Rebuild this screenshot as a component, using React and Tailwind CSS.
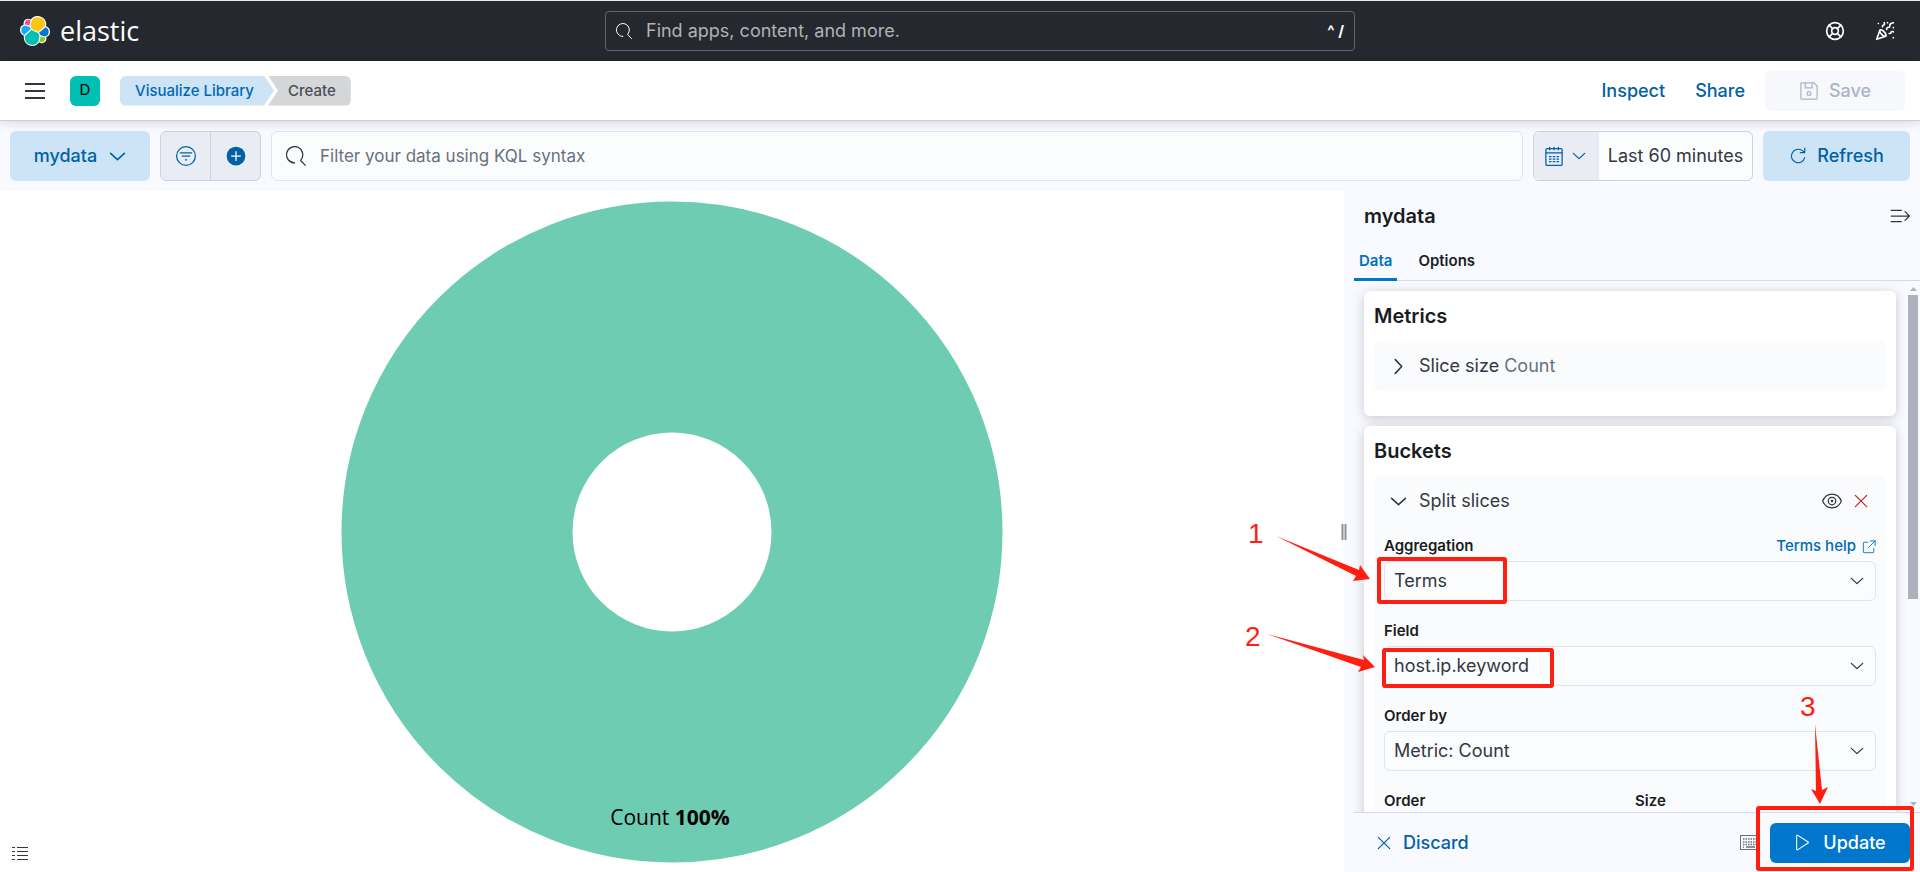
import React, { useState } from 'react';
import { LifeBuoy, PartyPopper } from 'lucide-react';

function Icon({ size = 20, className = '', strokeWidth = 1, children }) {
  return (
    <svg
      width={size}
      height={size}
      viewBox="0 0 16 16"
      fill="none"
      stroke="currentColor"
      strokeWidth={strokeWidth}
      strokeLinecap="round"
      strokeLinejoin="round"
      className={`shrink-0 ${className}`}
      aria-hidden="true"
    >
      {children}
    </svg>
  );
}

const ChevronDown = (props) => (
  <Icon strokeWidth={1.5} {...props}><path d="M1.500 5l6.500 6 6.500-6" /></Icon>
);

const ChevronRight = (props) => (
  <Icon strokeWidth={1.5} {...props}><path d="M5 1.500l6 6.500-6 6.500" /></Icon>
);

const Cross = (props) => (
  <Icon strokeWidth={1.4} {...props}><path d="M1.500 1.500l13 13M14.500 1.500l-13 13" /></Icon>
);

const SearchIcon = (props) => (
  <Icon {...props}>
    <path d="M6.9 13.5a6.5 6.5 0 1 1 4.9-2.2M11.8 11.8l3.7 3.7" />
  </Icon>
);

function ElasticLogo() {
  return (
    <svg width="30" height="30" viewBox="0 0 32 32" aria-hidden="true">
      <path fill="#fff" d="M32 16.77a6.33 6.33 0 0 0-1.14-3.63 6.27 6.27 0 0 0-3.02-2.3 9.1 9.1 0 0 0 .16-1.71A9.13 9.13 0 0 0 11.49 3.8a4.86 4.86 0 0 0-7.47 5.34A6.37 6.37 0 0 0 0 15.1a6.35 6.35 0 0 0 1.14 3.64 6.28 6.28 0 0 0 3.03 2.3 9.1 9.1 0 0 0-.17 1.71 9.12 9.12 0 0 0 16.5 5.33 4.84 4.84 0 0 0 7.46-5.34A6.37 6.37 0 0 0 32 16.77" />
      <path fill="#FEC514" d="M12.58 13.79l7 3.2 7.07-6.2a7.9 7.9 0 0 0 .15-1.56 7.87 7.87 0 0 0-14.37-4.44l-1.18 6.11z" />
      <path fill="#00BFB3" d="M5.33 21.22a8 8 0 0 0-.15 1.58 7.9 7.9 0 0 0 14.42 4.46l1.17-6.09-1.56-2.99-7.03-3.2z" />
      <path fill="#F04E98" d="M5.29 9.07l4.8 1.13 1.06-5.46a3.79 3.79 0 0 0-5.86 4.33" />
      <path fill="#1BA9F5" d="M4.87 10.21a5.29 5.29 0 0 0-3.5 4.98 5.28 5.28 0 0 0 3.39 4.93l6.74-6.1-1.24-2.65z" />
      <path fill="#93C90E" d="M20.87 27.28a3.74 3.74 0 0 0 2.29.78 3.79 3.79 0 0 0 3.58-5l-4.8-1.12z" />
      <path fill="#07C" d="M21.85 20.56l5.28 1.24a5.29 5.29 0 0 0 3.49-4.98 5.28 5.28 0 0 0-3.39-4.93l-6.91 6.06z" />
    </svg>
  );
}

function TopBar() {
  return (
    <header className="flex h-[61px] shrink-0 items-center justify-between border-t border-[#e6ecec] bg-[#25282f]">
      <a href="#home" className="flex w-[150px] items-center gap-2.5 pl-5 text-white">
        <ElasticLogo />
        <span className="font-['Open_Sans',sans-serif] text-[27px] leading-8 font-normal">elastic</span>
      </a>
      <label className="flex h-10 w-[750px] items-center gap-3.5 rounded border border-[#64666c] px-2.5 text-white">
        <SearchIcon size={16} />
        <input
          type="search"
          aria-label="Find apps, content, and more."
          placeholder="Find apps, content, and more."
          className="min-w-0 flex-1 bg-transparent text-lg outline-none placeholder:text-[#b0b2b6]"
        />
        <span className="text-[15px] font-bold">^ /</span>
      </label>
      <div className="flex w-[110px] items-center gap-[30px] pl-[15px] text-white">
        <button aria-label="Help"><LifeBuoy size={20} strokeWidth={2} /></button>
        <button aria-label="News"><PartyPopper size={20} strokeWidth={2} /></button>
      </div>
    </header>
  );
}

function NavBar() {
  return (
    <div className="relative z-10 flex h-[60px] shrink-0 items-center border-b border-[#c9cde0] bg-white pr-[15px] pl-[25px] shadow-[0_2px_10px_rgba(0,0,0,0.14)]">
      <button aria-label="Toggle primary navigation" className="mr-[25px] text-[#343741]">
        <svg width="20" height="20" viewBox="0 0 20 20" fill="currentColor">
          <path d="M0 2h20v2H0zM0 9h20v2H0zM0 16h20v2H0z" />
        </svg>
      </button>
      <button className="mr-5 size-[30px] rounded-md bg-[#00bfb3] text-[15px] text-black">D</button>
      <nav className="flex text-[15px] leading-[30px] font-medium">
        <a
          href="#library"
          className="rounded-l-md bg-[#cce4f5] pr-5 pl-[15px] text-[#0068b5] [clip-path:polygon(0_0,calc(100%_-_10px)_0,100%_50%,calc(100%_-_10px)_100%,0_100%)]"
        >
          Visualize Library
        </a>
        <span className="-ml-1.5 rounded-r-md bg-[#d5d6d8] pr-[15px] pl-5 text-[#4a4d57] [clip-path:polygon(0_0,100%_0,100%_100%,0_100%,10px_50%)]">
          Create
        </span>
      </nav>
      <div className="ml-auto flex items-center text-lg font-medium text-[#0061a6]">
        <button className="mr-[30px]">Inspect</button>
        <button className="mr-5">Share</button>
        <button disabled className="flex h-10 w-[140px] items-center justify-center gap-2.5 rounded-md bg-[#f7f8fc] text-[#abb4c4]">
          <Icon>
            <path d="M1.500 2.500a1 1 0 0 1 1-1h9.500l2.500 2.500v9.500a1 1 0 0 1-1 1h-11a1 1 0 0 1-1-1zM5 1.500v4h5.500v-4" />
            <circle cx="8" cy="10" r="1.500" />
          </Icon>
          Save
        </button>
      </div>
    </div>
  );
}

function QueryBar() {
  return (
    <div className="flex h-[70px] shrink-0 gap-2.5 bg-[#f8faff] p-2.5 text-lg text-[#0061a6]">
      <button className="flex w-[140px] items-center justify-center gap-3 rounded-md bg-[#cce4f5] font-medium">
        mydata
        <ChevronDown size={17} />
      </button>
      <div className="flex w-[101px] divide-x divide-[#ccd2e3] overflow-hidden rounded-md border border-[#ccd2e3] bg-[#e9edf3]">
        <button aria-label="Saved queries" className="flex flex-1 items-center justify-center">
          <Icon>
            <circle cx="8" cy="8" r="7.500" />
            <path d="M3.500 5.500h9M5 8h6M7.500 11h1" />
          </Icon>
        </button>
        <button aria-label="Add filter" className="flex flex-1 items-center justify-center">
          <Icon>
            <circle cx="8" cy="8" r="7" fill="currentColor" />
            <path d="M8 4.500v7M4.500 8h7" stroke="#fff" />
          </Icon>
        </button>
      </div>
      <label className="flex flex-1 items-center gap-3.5 rounded-md border border-[#e0e3f0] bg-[#fbfcfe] px-3.5 text-[#343741]">
        <SearchIcon />
        <input
          aria-label="Filter your data using KQL syntax"
          placeholder="Filter your data using KQL syntax"
          className="min-w-0 flex-1 bg-transparent text-[17px] outline-none placeholder:text-[#69707d]"
        />
      </label>
      <div className="flex w-[220px] overflow-hidden rounded-md border border-[#ccd2e3] bg-[#fbfcfe]">
        <button aria-label="Date quick select" className="flex w-[65px] items-center justify-center gap-2 bg-[#e9edf3] pr-1">
          <Icon>
            <rect x="1.500" y="2" width="13" height="13.500" rx="1" />
            <path d="M1.500 5.500h13M4.500 1v2M8 1v2M11.500 1v2" />
            <path d="M4 8.500h8M4 10.500h8M4 12.500h8" strokeDasharray="2 1" strokeLinecap="butt" />
          </Icon>
          <ChevronDown size={14} />
        </button>
        <button className="flex-1 text-center text-[#343741]">Last 60 minutes</button>
      </div>
      <button className="flex w-[147px] items-center justify-center gap-2.5 rounded-md bg-[#cce4f5] font-medium">
        <Icon size={18}>
          <path d="M14 9.500A6 6 0 1 1 11.500 3l2 1.500M14 1v4h-4" />
        </Icon>
        Refresh
      </button>
    </div>
  );
}

function Chart() {
  return (
    <main className="flex min-w-0 flex-1 items-center bg-white">
      <button aria-label="Toggle legend" className="mb-2.5 ml-3 self-end text-[#343741]">
        <svg width="16" height="16" viewBox="0 0 16 16" stroke="currentColor">
          <path d="M0 1.500h3M5 1.500h11M0 5.500h3M5 5.500h11M0 9.500h3M5 9.500h11M0 13.500h3M5 13.500h11" />
        </svg>
      </button>
      <div className="flex min-w-0 flex-1 justify-center pr-7">
        <svg width="662" height="662" viewBox="0 0 662 662" role="img" aria-label="Count 100%">
          <circle cx="331" cy="331" r="215" fill="none" stroke="#6dccb1" strokeWidth="231" />
          <text x="329" y="624" textAnchor="middle" className="fill-black font-['Open_Sans',sans-serif] text-[21px]">
            Count <tspan className="font-bold">100%</tspan>
          </text>
        </svg>
      </div>
    </main>
  );
}

function SelectField({ id, label, options, help }) {
  return (
    <div className="mb-5">
      <div className="mb-1 flex h-[21px] items-center justify-between text-[15px]">
        <label htmlFor={id} className="font-semibold text-[#1a1c21]">{label}</label>
        {help && (
          <a href="#help" className="flex items-center gap-1.5 font-medium text-[#006bb8]">
            {help}
            <Icon size={14}>
              <path d="M6.500 2.500h-4a1 1 0 0 0-1 1v10a1 1 0 0 0 1 1h10a1 1 0 0 0 1-1v-4M9.500 1h5.500v5.500M15 1L7.500 8.500" />
            </Icon>
          </a>
        )}
      </div>
      <div className="relative">
        <select id={id} className="h-10 w-full appearance-none rounded-md border border-[#e0e3f0] bg-[#fbfcfe] px-[9px] text-lg text-[#343741]">
          {options.map((o) => <option key={o}>{o}</option>)}
        </select>
        <ChevronDown size={14} className="pointer-events-none absolute top-[13px] right-3 text-[#343741]" />
      </div>
    </div>
  );
}

function Sidebar() {
  const [tab, setTab] = useState('Data');

  return (
    <aside className="flex w-[30%] flex-col bg-[#f8faff] pl-2.5">
      <div className="flex h-[50px] items-center justify-between pr-2.5 pl-2.5">
        <h2 className="text-[20px] font-semibold text-[#1a1c21]">mydata</h2>
        <button aria-label="Toggle sidebar" className="text-[#343741]">
          <Icon>
            <path d="M1 3.500h8M1 8h14M1 12.500h8M12 4.500L15.500 8 12 11.500" />
          </Icon>
        </button>
      </div>
      <div role="tablist" className="flex h-10 gap-4 border-b border-[#d3dae6] text-[15px] font-semibold">
        {['Data', 'Options'].map((name) => (
          <button
            key={name}
            role="tab"
            aria-selected={tab === name}
            onClick={() => setTab(name)}
            className={tab === name
              ? '-mb-px border-b-3 border-[#07c] px-[5px] pt-1 text-[#0071c2]'
              : '-mb-px border-b-3 border-transparent px-[5px] pt-1 text-[#1a1c21]'}
          >
            {name}
          </button>
        ))}
      </div>

      <div className="flex min-h-0 flex-1 justify-between">
        <div className="flex min-w-0 flex-1 flex-col gap-2.5 overflow-hidden px-2.5 pt-2.5">
          <section className="shrink-0 rounded-md bg-white px-2.5 pt-2.5 pb-[25px] shadow-[0_2px_12px_rgba(0,0,0,0.2)]">
            <h3 className="mb-2.5 text-[20px] leading-[30px] font-semibold text-[#1a1c21]">Metrics</h3>
            <button className="flex h-[50px] w-full items-center rounded-md bg-[#fafbfd] pl-4 text-lg text-[#343741]">
              <ChevronRight size={17} className="mr-3" />
              <span>Slice size <span className="text-[#69707d]">Count</span></span>
            </button>
          </section>

          <section className="shrink-0 rounded-md bg-white p-2.5 shadow-[0_2px_12px_rgba(0,0,0,0.2)]">
            <h3 className="mb-2.5 text-[20px] leading-[30px] font-semibold text-[#1a1c21]">Buckets</h3>
            <div className="rounded-md bg-[#fafbfd] px-2.5">
              <div className="mb-2.5 flex h-[50px] items-center pl-1.5 text-lg text-[#343741]">
                <button className="flex items-center gap-3">
                  <ChevronDown size={17} />
                  Split slices
                </button>
                <button aria-label="Disable split" className="ml-auto">
                  <Icon>
                    <path d="M.5 8C2 4.500 4.700 2.500 8 2.500s6 2 7.500 5.500c-1.500 3.500-4.200 5.500-7.500 5.500S2 11.500.5 8z" />
                    <circle cx="8" cy="8" r="3" />
                    <circle cx="8" cy="8" r=".5" />
                  </Icon>
                </button>
                <button aria-label="Remove split" className="mr-2 ml-3 text-[#bd271e]">
                  <Cross size={14} />
                </button>
              </div>
              <SelectField id="agg" label="Aggregation" options={['Terms']} help="Terms help" />
              <SelectField id="field" label="Field" options={['host.ip.keyword']} />
              <SelectField id="orderBy" label="Order by" options={['Metric: Count']} />
              <div className="grid grid-cols-2 gap-2.5">
                <SelectField id="order" label="Order" options={['Descending']} />
                <SelectField id="size" label="Size" options={['5']} />
              </div>
            </div>
          </section>
        </div>
        <div className="flex w-3.5 shrink-0 flex-col items-center py-1.5 text-[#b0b3bd]">
          <svg width="7" height="4" viewBox="0 0 7 4" fill="currentColor"><path d="M0 4l3.500-4L7 4z" /></svg>
          <div className="mt-1 h-[304px] w-2.5 bg-[#adb1bb]" />
          <svg className="mt-auto" width="7" height="4" viewBox="0 0 7 4" fill="currentColor"><path d="M0 0h7L3.500 4z" /></svg>
        </div>
      </div>

      <div className="flex h-[60px] shrink-0 items-center border-t border-[#d3dae6] pr-2.5 pl-[23px] text-lg font-medium">
        <button className="flex items-center gap-3 text-[#0061a6]">
          <Cross size={14} />
          Discard
        </button>
        <svg className="mr-2.5 ml-auto" width="20" height="16" viewBox="0 0 20 16" fill="none" stroke="#69707d" aria-hidden="true">
          <rect x=".5" y=".5" width="19" height="14" />
          <path d="M3 4h14M3 7h14M3 9.500h14" strokeWidth="1.500" strokeDasharray="1.500 1" />
          <path d="M6 12h9M3 12h1" strokeWidth="1.500" />
        </svg>
        <button className="flex h-10 w-[140px] items-center justify-center gap-3 rounded-md bg-[#07c] text-white">
          <Icon size={17}>
            <path d="M2.500 1.500v13a.5.5 0 0 0 .8.4l10-6.400a.6.6 0 0 0 0-1l-10-6.400a.5.5 0 0 0-.8.4z" />
          </Icon>
          Update
        </button>
      </div>
    </aside>
  );
}

// step markers drawn over the editor, measured from the right edge
function Annotations() {
  return (
    <svg
      className="pointer-events-none absolute top-0 right-0 z-20"
      width="720"
      height="872"
      viewBox="1200 0 720 872"
      fill="#ff1f10"
    >
      <g fill="none" stroke="#ff1f10" strokeWidth="4" strokeLinejoin="round">
        <rect x="1379" y="559" width="126" height="43" rx="1" />
        <rect x="1384" y="650" width="168" height="36" rx="1" />
        <rect x="1758" y="808" width="154" height="61" rx="1" />
      </g>
      <path d="M1276 536L1359 570 1360 565 1370 579 1353 581 1356 576z" />
      <path d="M1267 634L1364 660 1363 655 1375 667 1358 672 1361 667z" />
      <path d="M1815 724L1822 790 1828 787 1820 804 1811 789 1816 791z" />
      <g className="font-['Liberation_Sans',sans-serif] text-[28px]">
        <text x="1248" y="543">1</text>
        <text x="1245" y="646">2</text>
        <text x="1800" y="716">3</text>
      </g>
    </svg>
  );
}

function App() {
  return (
    <div className="relative flex h-screen flex-col overflow-hidden font-['Inter',sans-serif]">
      <TopBar />
      <NavBar />
      <QueryBar />
      <div className="relative flex min-h-0 flex-1">
        <Chart />
        <div className="absolute top-1/2 right-[30%] flex h-4 w-[5px] -translate-y-1/2 translate-x-1/2 justify-between border-x-2 border-[#8f9198]" />
        <Sidebar />
      </div>
      <Annotations />
    </div>
  );
}

export default App;
